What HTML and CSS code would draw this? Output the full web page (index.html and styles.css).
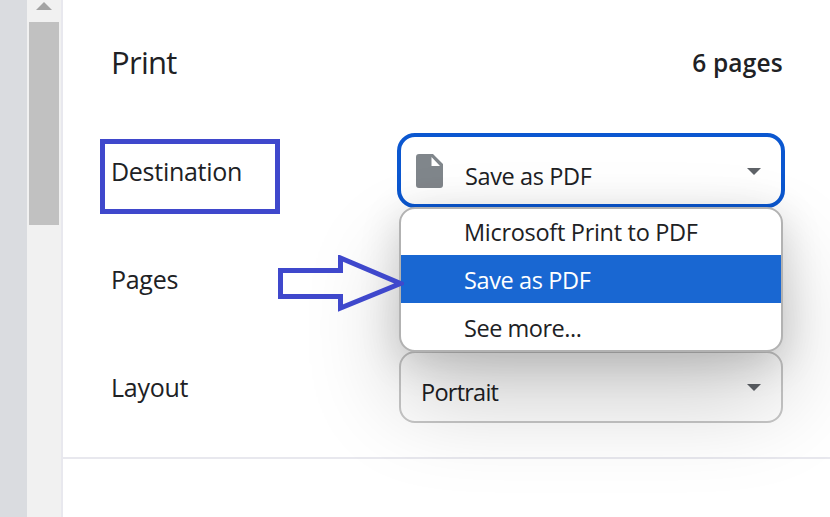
FILE: index.html
```html
<!DOCTYPE html>
<html lang="en">
<head>
<meta charset="utf-8">
<title>Print</title>
<link rel="stylesheet" href="styles.css">
</head>
<body>
<div class="app">
  <div class="preview"></div>
  <div class="scrollbar">
    <svg class="scroll-up" width="16" height="8" viewBox="0 0 16 8"><path d="M0 8L8 0l8 8z"/></svg>
    <div class="thumb"></div>
  </div>
  <main class="panel">
    <header class="header">
      <h1 class="title">Print</h1>
      <span class="count">6 pages</span>
    </header>
    <section class="settings">
      <div class="row">
        <span class="label label-destination">Destination<span class="highlight"></span></span>
        <div class="control">
          <div class="select focused">
            <svg class="file" width="27" height="34" viewBox="0 0 27 34"><path fill-rule="evenodd" d="M3 0H17L27 10V31a3 3 0 0 1-3 3H3a3 3 0 0 1-3-3V3a3 3 0 0 1 3-3zM15.500 3v9H24z"/></svg>
            <span class="value save">Save as PDF</span>
            <svg class="caret" width="14" height="7" viewBox="0 0 14 7"><path d="M0 0h14L7 7z"/></svg>
          </div>
          <div class="menu">
            <div class="item microsoft">Microsoft Print to PDF</div>
            <div class="item save selected">Save as PDF</div>
            <div class="item more">See more...</div>
          </div>
        </div>
      </div>
      <div class="row">
        <span class="label label-pages">Pages</span>
        <svg class="arrow" width="128" height="60" viewBox="0 0 128 60"><path d="M4.500 15.500H64.500V3L124.500 28.500L64.500 53V41.500H4.500z"/></svg>
      </div>
      <div class="row">
        <span class="label label-layout">Layout</span>
        <div class="control">
          <div class="select">
            <span class="value portrait">Portrait</span>
            <svg class="caret" width="14" height="7" viewBox="0 0 14 7"><path d="M0 0h14L7 7z"/></svg>
          </div>
        </div>
      </div>
    </section>
  </main>
</div>
</body>
</html>
```
FILE: styles.css
```css
* { box-sizing: border-box; }
body {
  margin: 0;
  background: #fff;
  color: #202124;
  font-family: "Open Sans", "Noto Sans", sans-serif;
  overflow: hidden;
}
.app { display: flex; height: 517px; }
.preview { width: 27px; background: #dadce0; }
.scrollbar {
  width: 36px;
  padding: 2px 2px 0;
  background: #f1f1f1;
  border-right: 2px solid #e8e8ee;
}
.scroll-up { display: block; margin: 0 0 12px 7px; fill: #a3a3a3; }
.thumb { width: 30px; height: 203px; background: #c1c1c1; }
.panel { flex: 1; min-width: 0; }
.header {
  display: flex;
  justify-content: space-between;
  align-items: center;
  height: 118px;
  padding: 0 47px 0 48px;
}
.title { margin: 0 0 -6px; font-size: 31px; line-height: 40px; font-weight: 400; letter-spacing: -.7px; }
.count { margin-bottom: -8px; font-size: 24.500px; line-height: 32px; font-weight: 600; letter-spacing: .2px; }
.settings { height: 341px; border-bottom: 2px solid #e8e8ee; }
.row {
  position: relative;
  display: flex;
  align-items: center;
  justify-content: space-between;
  height: 108px;
  padding: 0 47px 0 48px;
}
.label { position: relative; margin-top: -2px; font-size: 25px; line-height: 34px; letter-spacing: -.28px; white-space: nowrap; }
.highlight {
  position: absolute;
  left: -11px;
  top: -15px;
  width: 180px;
  height: 75px;
  border: 5px solid #3f48cc;
}
.control { position: relative; width: 384px; margin-top: -2px; }
.select {
  display: flex;
  align-items: center;
  height: 72px;
  padding: 0 20px;
  border: 2px solid #c7c7c7;
  border-radius: 16px;
  white-space: nowrap;
}
.focused {
  height: 75px;
  margin: -1px -2px 0;
  padding: 2px 20px 0 15px;
  border: 4px solid #0b57d0;
  border-radius: 18px;
}
.file { fill: #80868b; margin: 0 22px 2px 0; }
.value { font-size: 23.500px; line-height: 32px; margin-top: 9px; }
.save { letter-spacing: -.38px; }
.microsoft { letter-spacing: -.3px; }
.more { letter-spacing: -.47px; }
.portrait { letter-spacing: -.75px; }
.caret { margin-left: auto; fill: #5f6368; }
.menu {
  position: absolute;
  z-index: 2;
  top: 73px;
  left: 0;
  width: 384px;
  height: 145px;
  overflow: hidden;
  background: #fff;
  border: 2px solid #b2b2b2;
  border-radius: 16px;
  box-shadow: 0 48px 96px rgba(0,0,0,.2), 0 8px 40px rgba(0,0,0,.16);
}
.item { height: 48px; padding: 3px 0 0 63px; font-size: 23.500px; line-height: 45px; white-space: nowrap; }
.microsoft { margin-top: -2px; }
.selected { background: #1967d2; color: #fff; }
.arrow { position: absolute; z-index: 3; left: 213px; top: 29px; fill: none; stroke: #3f48cc; stroke-width: 5; }
```
